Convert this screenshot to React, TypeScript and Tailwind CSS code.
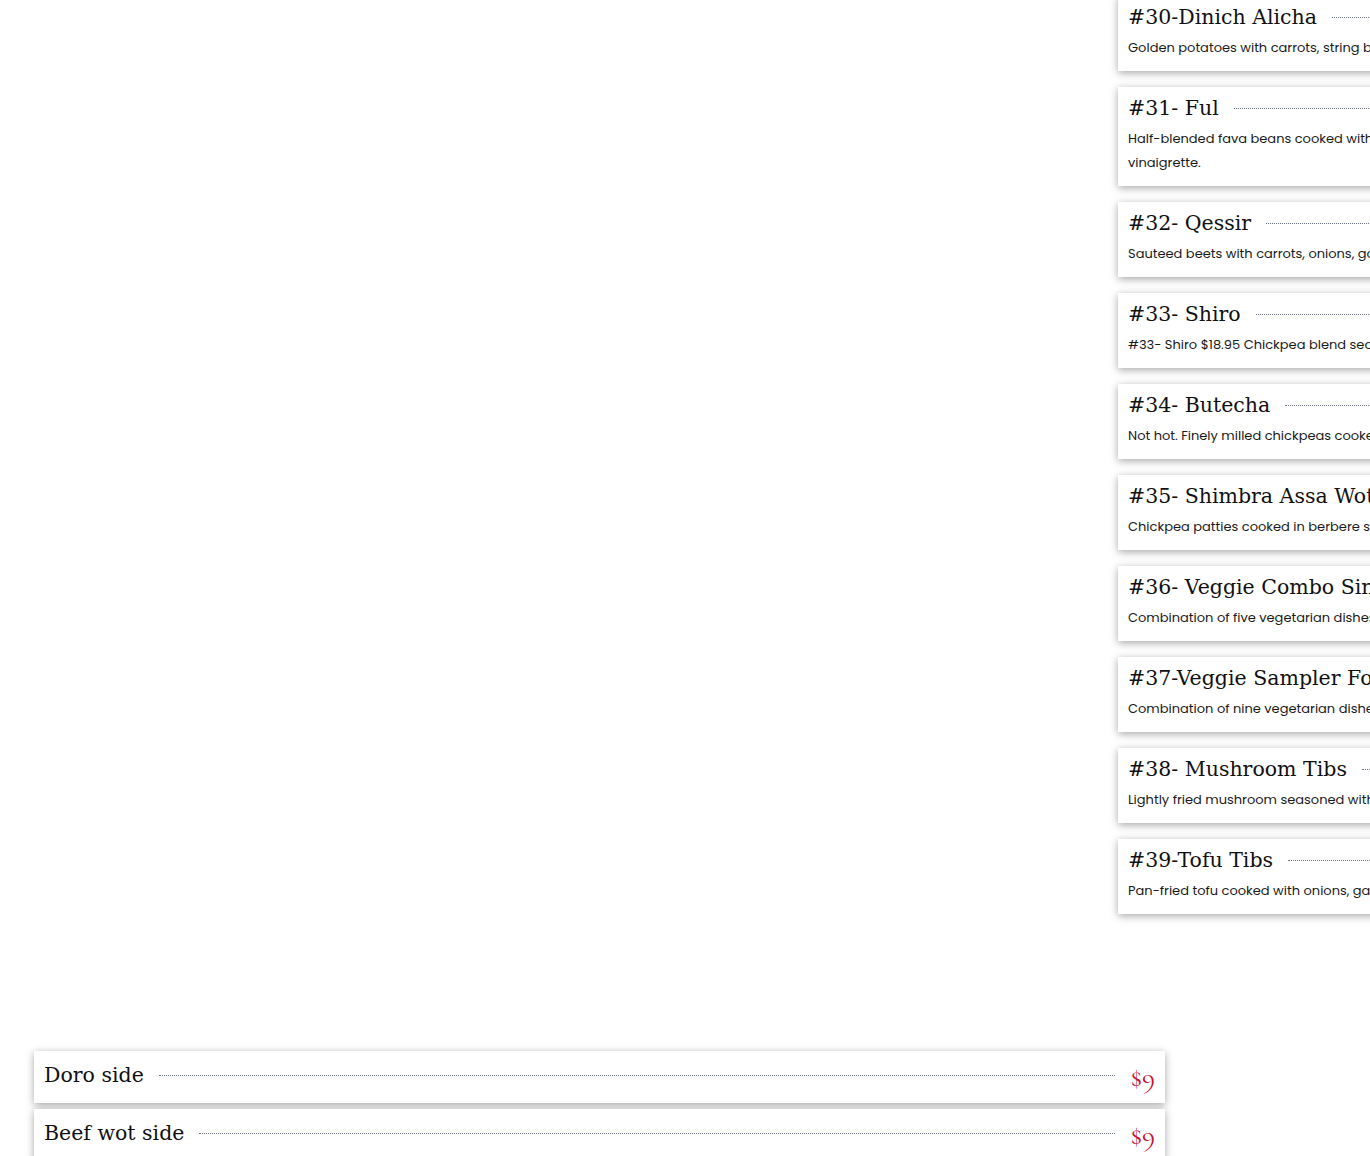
const veggie = [
  { title: '#30-Dinich Alicha', price: '$18.95', desc: 'Golden potatoes with carrots, string beans, onions and garlic.' },
  { title: '#31- Ful', price: '$18.95', desc: 'Half-blended fava beans cooked with onions, tomatoes, jalapeños, olive oil and\nvinaigrette.' },
  { title: '#32- Qessir', price: '$18.95', desc: 'Sauteed beets with carrots, onions, garlic and ginger.' },
  { title: '#33- Shiro', price: '$18.95', desc: '#33- Shiro $18.95 Chickpea blend seasoned with berbere.' },
  { title: '#34- Butecha', price: '$18.95', desc: 'Not hot. Finely milled chickpeas cooked and served cold.' },
  { title: '#35- Shimbra Assa Wot', price: '$18.95', desc: 'Chickpea patties cooked in berbere sauce with garlic.' },
  { title: '#36- Veggie Combo Single', price: '$22.95', desc: 'Combination of five vegetarian dishes of your choice.' },
  { title: '#37-Veggie Sampler For Two', price: '$39.95', desc: 'Combination of nine vegetarian dishes for two.' },
  { title: '#38- Mushroom Tibs', price: '$19.95', desc: 'Lightly fried mushroom seasoned with rosemary.' },
  { title: '#39-Tofu Tibs', price: '$19.95', desc: 'Pan-fried tofu cooked with onions, garlic and peppers.' },
]

const sides = [
  { title: 'Doro side', price: '$9' },
  { title: 'Beef wot side', price: '$9' },
]

const slab = "font-['Roboto_Slab','DejaVu_Serif',serif]"
const body = "font-['Poppins','Open_Sans',sans-serif]"
const priceFont = "font-['Cormorant_Garamond','Liberation_Serif',serif]"

function MenuCard({ title, price, desc }: { title: string; price: string; desc: string }) {
  return (
    <div className="bg-white px-[10px] pt-[6px] pb-[11px] shadow-[0_2px_8px_rgba(0,0,0,0.35)]">
      <div className="flex items-center gap-[15px]">
        <h3 className={`${slab} text-[20.5px] leading-[30px] text-[#111] whitespace-nowrap`}>{title}</h3>
        <span className="flex-1 border-t border-dotted border-gray-500" />
        <span className={`${priceFont} text-[26px] leading-[30px] text-[#c8102e]`}>{price}</span>
      </div>
      <p className={`${body} mt-1 text-[13px] leading-6 text-[#1a1a1a] whitespace-pre`}>{desc}</p>
    </div>
  )
}

export default function App() {
  return (
    <div className="w-full h-[1156px] overflow-hidden bg-white">
      {/* Vegetarian column, cut off at the right edge */}
      <div className="flex">
        <div className="w-[1118px] shrink-0" />
        <div className="w-[560px] shrink-0 -mt-[4px] flex flex-col gap-[16px]">
          {veggie.map((item) => (
            <MenuCard key={item.title} {...item} />
          ))}
        </div>
      </div>

      {/* Sides */}
      <div className="mt-[137px] ml-[34px] w-[1131px] flex flex-col gap-[6px]">
        {sides.map((s) => (
          <div key={s.title} className="bg-white px-[10px] pt-[7px] pb-[11px] shadow-[0_2px_8px_rgba(0,0,0,0.35)]">
            <div className="flex items-center gap-[15px]">
              <h3 className={`${slab} text-[20.5px] leading-[30px] text-[#111] whitespace-nowrap`}>{s.title}</h3>
              <span className="flex-1 border-t border-dotted border-gray-500" />
              <span className={`${priceFont} text-[28px] leading-[30px] text-[#c8102e] pt-[4px]`}>{s.price}</span>
            </div>
          </div>
        ))}
      </div>
    </div>
  )
}
